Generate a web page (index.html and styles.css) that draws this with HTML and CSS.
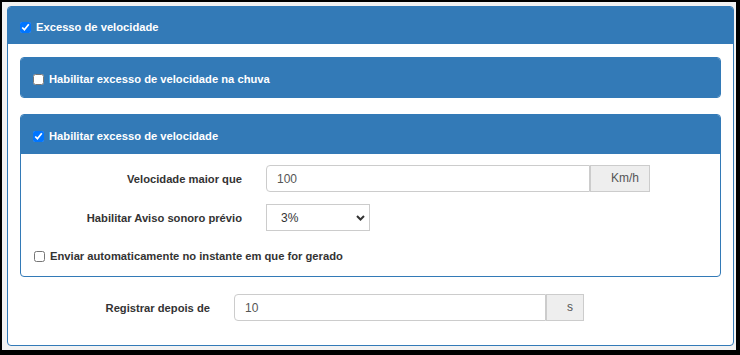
FILE: index.html
```html
<html>

<head>
    <meta charset="UTF-8">
    <meta name="viewport" content="width=device-width, initial-scale=1.0">
    <title>Excesso de velocidade</title>

    <link rel="stylesheet" href="styles.css">
</head>

<body>
    <div class="frame">
        <div class="panel main">
            <div class="panel-heading main-heading">
                <label class="check"><input type="checkbox" checked>Excesso de velocidade</label>
            </div>
            <div class="panel-body">

                <div class="panel sub">
                    <div class="panel-heading sub-heading">
                        <label class="check"><input type="checkbox">Habilitar excesso de velocidade na chuva</label>
                    </div>
                </div>

                <div class="panel sub">
                    <div class="panel-heading sub-heading">
                        <label class="check"><input type="checkbox" checked>Habilitar excesso de velocidade</label>
                    </div>
                    <div class="sub-body">
                        <div class="form-row">
                            <label class="row-label">Velocidade maior que</label>
                            <div class="input-group">
                                <input type="text" class="form-control speed" value="100">
                                <span class="addon speed-addon">Km/h</span>
                            </div>
                        </div>
                        <div class="form-row">
                            <label class="row-label">Habilitar Aviso sonoro prévio</label>
                            <div class="select-wrap">
                                <select class="form-select">
                                    <option>3%</option>
                                    <option>5%</option>
                                    <option>10%</option>
                                </select>
                                <svg class="chevron" width="9" height="6" viewBox="0 0 9 6">
                                    <path d="M1 1 L4.5 4.5 L8 1" fill="none" stroke="#333" stroke-width="2"/>
                                </svg>
                            </div>
                        </div>
                        <label class="check plain"><input type="checkbox">Enviar automaticamente no instante em que for gerado</label>
                    </div>
                </div>

                <div class="form-row outer-row">
                    <label class="row-label">Registrar depois de</label>
                    <div class="input-group">
                        <input type="text" class="form-control delay" value="10">
                        <span class="addon delay-addon">s</span>
                    </div>
                </div>

            </div>
        </div>
    </div>
</body>

</html>
```

FILE: styles.css
```css
* {
    box-sizing: border-box;
}

html {
    background-color: #000;
}

body {
    margin: 0;
    font-family: "Liberation Sans", Arial, sans-serif;
    color: #333;
}

.frame {
    margin: 2px 4px 5px 2px;
    padding: 4px 2px 4px 5px;
    background-color: #f2f2f2;
}

.panel {
    border: 1px solid #337ab7;
    border-radius: 4px;
    background-color: #fff;
}

.panel-heading {
    background-color: #337ab7;
    border-radius: 3px 3px 0 0;
}

.main-heading {
    padding: 12px 12px 8px;
}

.sub-heading {
    padding: 13px 12px 9px;
}

.panel-body {
    padding: 13px 12px 24px;
}

.sub {
    margin-bottom: 16px;
}

.sub:first-child .panel-heading {
    border-radius: 3px;
}

.sub-body {
    padding: 11px 13px 11px;
}

.check {
    display: flex;
    align-items: center;
    color: #fff;
    font-size: 11.2px;
    font-weight: bold;
    line-height: 17px;
}

.check input {
    width: 11px;
    height: 11px;
    margin: 0 5px 0 0;
}

.check.plain {
    color: #333;
    margin-top: 17px;
}

.form-row {
    display: flex;
    align-items: center;
    gap: 24px;
    height: 27px;
}

.form-row + .form-row {
    margin-top: 12px;
}

.row-label {
    width: 208px;
    text-align: right;
    font-size: 11.2px;
    font-weight: bold;
}

.input-group {
    display: flex;
    height: 27px;
}

.form-control {
    height: 27px;
    border: 1px solid #ccc;
    border-radius: 4px 0 0 4px;
    padding: 0 10px;
    font-family: "Liberation Sans", Arial, sans-serif;
    font-size: 12px;
    color: #555;
    outline: none;
}

.speed {
    width: 324px;
}

.delay {
    width: 312px;
}

.addon {
    height: 27px;
    border: 1px solid #ccc;
    background-color: #eee;
    padding-right: 10px;
    font-size: 12px;
    line-height: 25px;
    color: #555;
    text-align: right;
}

.speed-addon {
    width: 60px;
}

.delay-addon {
    width: 38px;
}

.select-wrap {
    position: relative;
    width: 104px;
    height: 27px;
}

.form-select {
    appearance: none;
    -webkit-appearance: none;
    width: 104px;
    height: 27px;
    border: 1px solid #ccc;
    border-radius: 0;
    background-color: #fff;
    padding: 0 0 0 14px;
    font-family: "Liberation Sans", Arial, sans-serif;
    font-size: 12px;
    color: #333;
    outline: none;
}

.chevron {
    position: absolute;
    right: 5px;
    top: 11px;
    pointer-events: none;
}

.outer-row {
    margin-top: 17px;
}

.outer-row .row-label {
    width: 190px;
}
```
